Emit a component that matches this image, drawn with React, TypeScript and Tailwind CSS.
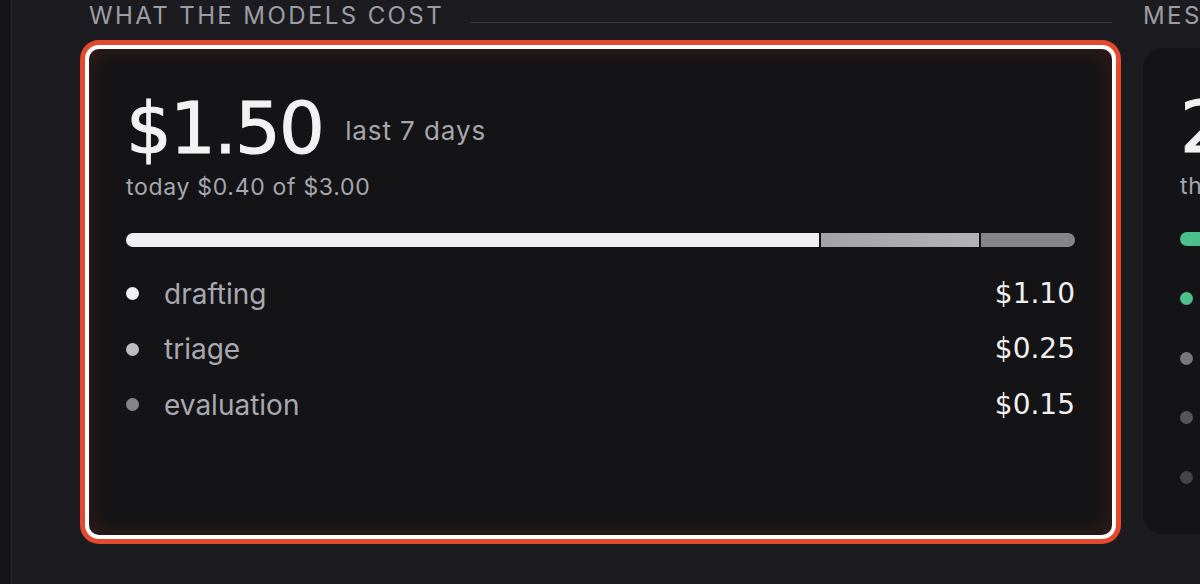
const costs = [
  { label: 'drafting', value: '$1.10', amount: 1.1, dot: 'bg-[#f2f2f2]', seg: 'bg-[#efefef]' },
  { label: 'triage', value: '$0.25', amount: 0.25, dot: 'bg-[#bdbdbd]', seg: 'bg-gradient-to-r from-[#a3a3a3] to-[#b3b3b3]' },
  { label: 'evaluation', value: '$0.15', amount: 0.15, dot: 'bg-[#858585]', seg: 'bg-[#868686]' },
];

const messages = [
  { label: 'sent', dot: 'bg-[#4cc08a]' },
  { label: 'queued', dot: 'bg-[#77777d]' },
  { label: 'held', dot: 'bg-[#55555b]' },
  { label: 'failed', dot: 'bg-[#444449]' },
];

const num = "font-['DejaVu_Sans',sans-serif]";

function SectionTitle({ title, rule }: { title: string; rule?: boolean }) {
  return (
    <div className="flex items-end gap-[26px] pt-[1px] h-[31px]">
      <h2 className="text-[24px] leading-[30px] tracking-[0.1em] text-[#9d9da5] whitespace-nowrap font-['Inter',sans-serif]">
        {title}
      </h2>
      {rule && <div className="flex-1 h-px bg-[#3a3a40] mb-[8px]" />}
    </div>
  );
}

function Headline({ value, note }: { value: string; note: string }) {
  return (
    <div className="flex items-start gap-[22px]">
      <span className={`${num} text-[72px] leading-[72px] tracking-[-0.025em] text-[#f2f2f2] [-webkit-text-stroke:1px_#f2f2f2]`}>
        {value}
      </span>
      <span className="mt-[24px] text-[26px] leading-[30px] tracking-[0.035em] text-[#a6a6ae]">{note}</span>
    </div>
  );
}

function CostCard() {
  const total = costs.reduce((s, c) => s + c.amount, 0);
  return (
    <div className="mt-[18px] h-[486px] rounded-[10px] bg-[#141416] px-[37px] pt-[43px] shadow-[inset_0_0_22px_rgba(200,60,35,0.22),0_0_0_4px_#ffffff,0_0_0_9px_#e2492e]">
      <Headline value="$1.50" note="last 7 days" />
      <p className="mt-[9px] text-[23px] leading-[28px] tracking-[0.03em] text-[#a6a6ae]">today $0.40 of $3.00</p>

      <div className="mt-[32px] flex h-[14px] gap-[2px] overflow-hidden rounded-full">
        {costs.map(c => (
          <div key={c.label} className={c.seg} style={{ flexGrow: c.amount / total, flexBasis: 0 }} />
        ))}
      </div>

      <ul className="mt-[19px]">
        {costs.map(c => (
          <li key={c.label} className="flex h-[55.5px] items-center">
            <span className={`h-[13px] w-[13px] rounded-full ${c.dot}`} />
            <span className="ml-[25px] flex-1 text-[28px] text-[#a8a8b0]">{c.label}</span>
            <span className={`${num} text-[28px] text-[#f0f0f0]`}>{c.value}</span>
          </li>
        ))}
      </ul>
    </div>
  );
}

function MessageCard() {
  return (
    <div className="mt-[17px] h-[486px] rounded-[20px] bg-[#141416] px-[37px] pt-[43px]">
      <Headline value="24" note="sent" />
      <p className="mt-[9px] text-[23px] leading-[28px] tracking-[0.03em] text-[#a6a6ae]">this week, 3 held</p>
      <div className="mt-[32px] flex h-[14px] gap-[2px] overflow-hidden rounded-full">
        <div className="flex-[18] bg-[#4cc08a]" />
        <div className="flex-[3] bg-[#77777d]" />
        <div className="flex-[3] bg-[#55555b]" />
      </div>
      <ul className="mt-[23px]">
        {messages.map(m => (
          <li key={m.label} className="flex h-[59.5px] items-center">
            <span className={`h-[13px] w-[13px] rounded-full ${m.dot}`} />
            <span className="ml-[25px] text-[28px] text-[#a8a8b0]">{m.label}</span>
          </li>
        ))}
      </ul>
    </div>
  );
}

export default function App() {
  return (
    <div className="flex h-[584px] w-[1200px] overflow-hidden bg-[#1c1c20] font-['Inter',sans-serif]">
      <div className="w-[12px] shrink-0 border-r border-[#2c2c31] bg-[#151517]" />
      <div className="flex shrink-0 gap-[31px] pl-[77px]">
        <section className="w-[1023px] shrink-0">
          <SectionTitle title="WHAT THE MODELS COST" rule />
          <CostCard />
        </section>
        <section className="w-[520px] shrink-0">
          <SectionTitle title="MESSAGES OUT" />
          <MessageCard />
        </section>
      </div>
    </div>
  );
}
